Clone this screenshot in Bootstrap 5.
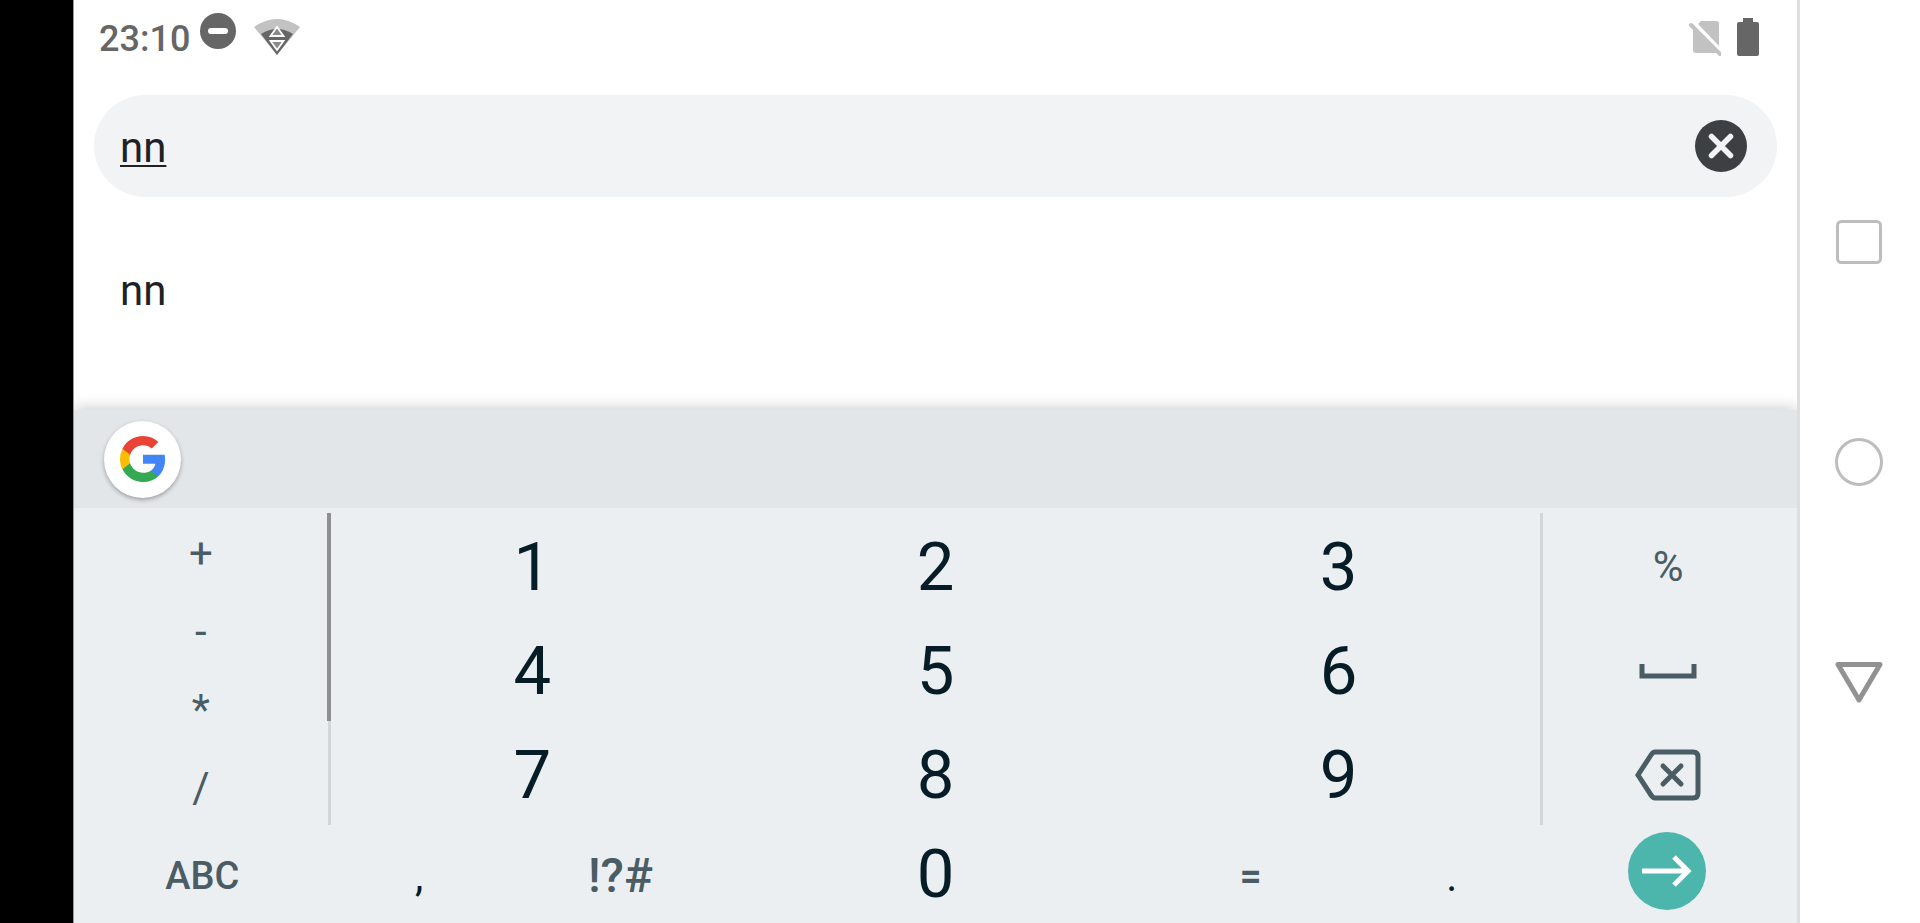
<!DOCTYPE html>
<html lang="en">
<head>
<meta charset="utf-8">
<meta name="viewport" content="width=device-width, initial-scale=1">
<title>Search</title>
<link href="https://cdn.jsdelivr.net/npm/bootstrap@5.3.0/dist/css/bootstrap.min.css" rel="stylesheet">
<style>
  body { font-family: Roboto, sans-serif; color: #202124; background: #fff; }
  svg { display: block; }
  button { border: 0; padding: 0; background: none; color: inherit; }
  .cutout { width: 74px; background: #000; border-right: 1px solid #999; }
  .status { height: 95px; padding: 16px 38px 0 25px; color: #666; }
  .clock { font-size: 36px; line-height: 46px; font-weight: 500; }
  .dnd { margin-top: -4px; }
  .search { height: 102px; margin: 0 20px; padding: 0 30px 0 26px; background: #f1f3f4; }
  .search input { font-size: 42px; line-height: 48px; color: #202124; border: 0; background: none; outline: 0; padding: 4px 0 0;
    text-decoration: underline; text-decoration-thickness: 2px; text-underline-offset: 3px; text-decoration-skip-ink: none; }
  .suggestion { font-size: 42px; line-height: 48px; padding: 70px 46px; color: #202124; text-decoration: none; }
  .keyboard { background: #ebeff2; color: #4a5c64; box-shadow: 0 -2px 14px rgba(0,0,0,.2); clip-path: inset(-16px 0 0 0); }
  .toolbar { height: 98px; padding-left: 30px; background: #e2e6e9; }
  .glogo { width: 77px; height: 77px; background: #fff; box-shadow: 0 2px 4px rgba(0,0,0,.3); }
  .side { width: 14.9%; flex: none; }
  .middle { flex: 1 1 0; }
  .pad { padding-top: 5px; }
  .pad .side, .pad .middle { height: 312px; }
  .symbols { font-size: 42px; line-height: 48px; font-weight: 500; border-right: 3px solid #d3d6d8; }
  .symbols button, .digits button, .pad .actions button { flex: 1 1 0; }
  .symbols button, .pad .digits button, .pad .actions button { padding-top: 3px; }
  .scroll { width: 4px; height: 208px; right: -3px; top: 0; background: #8f8f8f; }
  .digits { font-size: 67px; line-height: 72px; color: #061d28; }
  .actions { font-size: 42px; line-height: 48px; padding-right: 4px; }
  .pad .actions { border-left: 3px solid #d3d6d8; }
  .bottom { height: 98px; }
  .mode { font-size: 38px; line-height: 48px; font-weight: 500; padding-top: 3px; }
  .more { font-size: 48px; line-height: 48px; font-weight: 500; padding-top: 3px; }
  .equals { font-weight: 700; }
  .punct { flex: 177 1 0; font-size: 42px; line-height: 48px; color: #061d28; padding-top: 6px; }
  .sign { flex: 226 1 0; }
  .zero { flex: 405 1 0; }
  .go { width: 78px; height: 78px; background: #4db6ac; margin-bottom: 6px; }
  .sysnav { width: 123px; border-left: 3px solid #dedede; padding-right: 2px; gap: 172px; }
</style>
</head>
<body>
<div class="d-flex min-vh-100">
  <div class="cutout flex-shrink-0"></div>
  <main class="flex-grow-1 d-flex flex-column">
    <header class="status d-flex align-items-start">
      <span class="clock me-2">23:10</span>
      <svg class="dnd me-3" width="40" height="40" viewBox="0 0 40 40"><circle cx="20" cy="19" r="18" fill="#666"/><rect x="10" y="16" width="20" height="6" rx="3" fill="#fff"/></svg>
      <svg width="46" height="40" viewBox="0 0 46 40"><path d="M0 11Q23-5 46 11L23 39Z" fill="#c2c2c2"/><path d="M7 18Q23 8 39 18L23 39Z" fill="#666"/><path d="M16.500 20L23 11L29.500 20ZM16.500 25H29.500L23 34Z" fill="#8a8a8a" stroke="#fff" stroke-width="1.800"/></svg>
      <svg class="ms-auto me-3" width="34" height="40" viewBox="0 0 34 40"><path d="M14 5H29Q32 5 32 8V30L11 8ZM6 12L31 37H9Q6 37 6 34Z" fill="#c2c2c2"/><path d="M4 9L33 38" stroke="#c2c2c2" stroke-width="4" stroke-linecap="round"/></svg>
      <svg width="22" height="40" viewBox="0 0 22 40"><path d="M6 2H16V6H20Q22 6 22 8V38Q22 40 20 40H2Q0 40 0 38V8Q0 6 2 6H6Z" fill="#666"/></svg>
    </header>
    <form class="search rounded-pill d-flex align-items-center" onsubmit="return false">
      <input class="flex-grow-1" type="text" value="nn" aria-label="Search">
      <button type="reset" aria-label="Clear"><svg width="52" height="52" viewBox="0 0 52 52"><circle cx="26" cy="26" r="26" fill="#3c4043"/><path d="M16.500 16.500L35.500 35.500M35.500 16.500L16.500 35.500" stroke="#f1f3f4" stroke-width="5.500" stroke-linecap="round"/></svg></button>
    </form>
    <a class="suggestion" href="#">nn</a>
    <section class="keyboard mt-auto" aria-label="Keyboard">
      <div class="toolbar d-flex align-items-center">
        <button type="button" class="glogo rounded-circle d-flex align-items-center justify-content-center" aria-label="Google">
          <svg width="46" height="46" viewBox="2 2 44 44"><path fill="#4285f4" d="M45.120 24.500c0-1.560-.14-3.060-.4-4.500H24v8.510h11.840c-.51 2.750-2.060 5.080-4.390 6.640v5.520h7.110c4.160-3.830 6.560-9.470 6.560-16.170z"/><path fill="#34a853" d="M24 46c5.940 0 10.920-1.970 14.560-5.330l-7.110-5.520c-1.970 1.320-4.490 2.100-7.450 2.100-5.730 0-10.580-3.870-12.310-9.070H4.340v5.700C7.960 41.070 15.400 46 24 46z"/><path fill="#fbbc05" d="M11.690 28.180C11.250 26.860 11 25.450 11 24s.25-2.860.69-4.180v-5.700H4.340A21.990 21.990 0 0 0 2 24c0 3.550.85 6.910 2.340 9.880l7.350-5.700z"/><path fill="#ea4335" d="M24 10.750c3.230 0 6.130 1.110 8.410 3.290l6.310-6.310C34.910 4.180 29.930 2 24 2 15.400 2 7.960 6.930 4.340 14.120l7.350 5.700c1.730-5.200 6.580-9.070 12.310-9.070z"/></svg>
        </button>
      </div>
      <div class="pad d-flex">
        <div class="side symbols position-relative d-flex flex-column">
          <button type="button">+</button><button type="button">-</button><button type="button">*</button><button type="button">/</button>
          <span class="scroll position-absolute"></span>
        </div>
        <div class="middle digits d-flex flex-column">
          <div class="d-flex flex-fill"><button type="button">1</button><button type="button">2</button><button type="button">3</button></div>
          <div class="d-flex flex-fill"><button type="button">4</button><button type="button">5</button><button type="button">6</button></div>
          <div class="d-flex flex-fill"><button type="button">7</button><button type="button">8</button><button type="button">9</button></div>
        </div>
        <div class="side actions d-flex flex-column">
          <button type="button">%</button>
          <button type="button" class="d-flex align-items-center justify-content-center" aria-label="Space"><svg width="58" height="16" viewBox="0 0 58 16"><path d="M3 1V13H55V1" fill="none" stroke="#4a5c64" stroke-width="5"/></svg></button>
          <button type="button" class="d-flex align-items-center justify-content-center" aria-label="Backspace"><svg width="66" height="52" viewBox="0 0 66 52"><path d="M20 3H58Q63 3 63 8V44Q63 49 58 49H20Q18 49 16 46L3 26L16 6Q18 3 20 3Z" fill="none" stroke="#4a5c64" stroke-width="5"/><path d="M28 17L46 35M46 17L28 35" stroke="#4a5c64" stroke-width="5" stroke-linecap="round"/></svg></button>
        </div>
      </div>
      <div class="bottom d-flex">
        <button type="button" class="side mode">ABC</button>
        <div class="middle d-flex">
          <button type="button" class="punct">,</button>
          <button type="button" class="sign more">!?#</button>
          <button type="button" class="zero digits">0</button>
          <button type="button" class="sign mode equals">=</button>
          <button type="button" class="punct">.</button>
        </div>
        <div class="side actions d-flex align-items-center justify-content-center">
          <button type="button" class="go rounded-circle d-flex align-items-center justify-content-center" aria-label="Go"><svg width="50" height="32" viewBox="0 0 50 32"><path d="M0 16H46M32 2L46 16L32 30" fill="none" stroke="#fff" stroke-width="5"/></svg></button>
        </div>
      </div>
    </section>
  </main>
  <nav class="sysnav flex-shrink-0 d-flex flex-column align-items-center justify-content-center" aria-label="System">
    <button type="button" aria-label="Recent apps"><svg width="48" height="48" viewBox="0 0 48 48"><rect x="2.500" y="3.500" width="43" height="41" rx="4" fill="none" stroke="#bdbdbd" stroke-width="3"/></svg></button>
    <button type="button" aria-label="Home"><svg width="48" height="48" viewBox="0 0 48 48"><circle cx="24" cy="24" r="22.500" fill="none" stroke="#bdbdbd" stroke-width="3"/></svg></button>
    <button type="button" aria-label="Back"><svg width="48" height="48" viewBox="0 0 48 48"><path d="M3 6.500H45L24 42Z" fill="none" stroke="#929292" stroke-width="5" stroke-linejoin="round"/></svg></button>
  </nav>
</div>
<script src="https://cdn.jsdelivr.net/npm/bootstrap@5.3.0/dist/js/bootstrap.bundle.min.js"></script>
</body>
</html>
